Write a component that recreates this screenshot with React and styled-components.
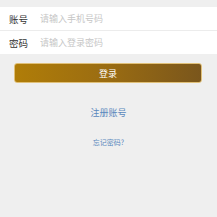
import React from 'react';
import styled, { createGlobalStyle } from 'styled-components';

const GlobalStyle = createGlobalStyle`
  html, body {
    margin: 0;
    padding: 0;
    background: #efefef;
    font-family: "Noto Sans CJK SC", "Noto Sans", sans-serif;
  }
`;

const Page = styled.div`
  padding-top: 7px;
  min-height: 217px;
  box-sizing: border-box;
`;

const Form = styled.div`
  background: #fff;
`;

const Row = styled.div`
  display: flex;
  align-items: center;
  height: 23px;
  padding-left: 9px;
  border-bottom: ${(p) => (p.last ? 'none' : '1px solid #ececec')};
`;

const Label = styled.span`
  width: 31px;
  font-size: 9.5px;
  color: #333;
`;

const Input = styled.input`
  flex: 1;
  border: none;
  outline: none;
  padding: 0;
  font-family: inherit;
  font-size: 9px;
  color: #333;
  background: transparent;

  &::placeholder {
    color: #c6c6c6;
  }
`;

const Button = styled.button`
  display: block;
  margin: 9px 15px 0 14px;
  width: 188px;
  height: 20px;
  border: 1px solid #e0c078;
  border-radius: 3px;
  background: linear-gradient(90deg, #b07d08 0%, #9a6c12 50%, #7a561c 100%);
  color: #fff;
  font-family: inherit;
  font-size: 9px;
  padding: 0;
`;

const Links = styled.div`
  display: flex;
  flex-direction: column;
  align-items: center;
  padding-top: 24px;
  gap: 19px;
`;

const Link = styled.a`
  color: #5a88bd;
  font-size: ${(p) => (p.small ? '7px' : '9px')};
  text-decoration: none;
  line-height: 11px;
`;

export default function App() {
  return (
    <>
      <GlobalStyle />
      <Page>
        <Form>
          <Row>
            <Label>账号</Label>
            <Input placeholder="请输入手机号码" />
          </Row>
          <Row last>
            <Label>密码</Label>
            <Input type="password" placeholder="请输入登录密码" />
          </Row>
        </Form>
        <Button>登录</Button>
        <Links>
          <Link>注册账号</Link>
          <Link small>忘记密码?</Link>
        </Links>
      </Page>
    </>
  );
}
